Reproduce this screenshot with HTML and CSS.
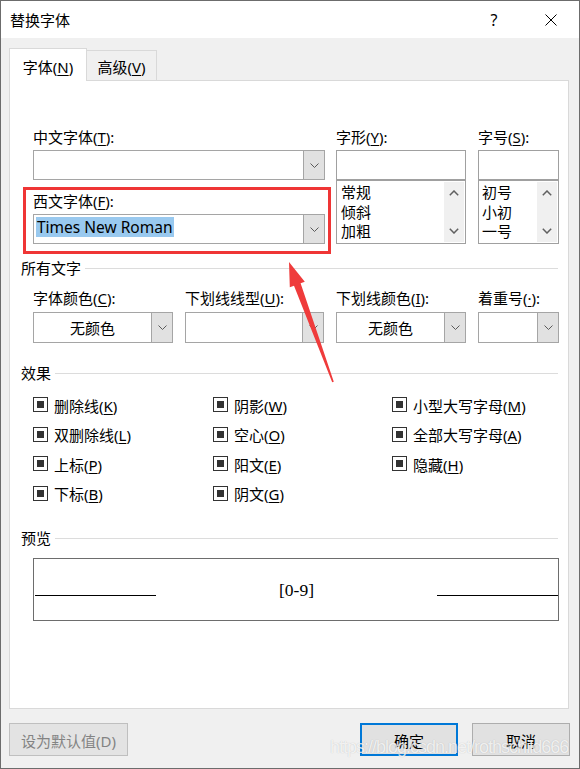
FILE: index.html
```html
<!DOCTYPE html>
<html lang="zh-CN">
<head>
<meta charset="utf-8">
<title>替换字体</title>
<link rel="stylesheet" href="styles.css">
</head>
<body>
<div class="window">
  <header class="titlebar">
    <span class="title">替换字体</span>
    <span class="caption-btn help">?</span>
    <span class="caption-btn close">
      <svg width="12" height="12" viewBox="0 0 12 12"><path d="M0.5 0.5 L11.5 11.5 M11.5 0.5 L0.5 11.5" stroke="#000" stroke-width="1" fill="none"/></svg>
    </span>
  </header>

  <div class="client">
    <nav class="tabs">
      <div class="tab active">字体(<u>N</u>)</div>
      <div class="tab next">高级(<u>V</u>)</div>
    </nav>

    <section class="panel">
      <div class="font-pick">
        <div class="col-main">
          <div class="label">中文字体(<u>T</u>):</div>
          <div class="combo">
            <span class="combo-text"></span>
            <span class="combo-btn"><svg width="9" height="5" viewBox="0 0 9 5"><polyline points="0.5,0.5 4.5,4.5 8.5,0.5" fill="none" stroke="#5a5a5a" stroke-width="1"/></svg></span>
          </div>
          <div class="callout">
            <div class="label">西文字体(<u>F</u>):</div>
            <div class="combo">
              <span class="combo-text"><span class="sel">Times New Roman</span></span>
              <span class="combo-btn"><svg width="9" height="5" viewBox="0 0 9 5"><polyline points="0.5,0.5 4.5,4.5 8.5,0.5" fill="none" stroke="#5a5a5a" stroke-width="1"/></svg></span>
            </div>
          </div>
        </div>

        <div class="col-style">
          <div class="label">字形(<u>Y</u>):</div>
          <div class="field"></div>
          <div class="listbox">
            <ul class="items">
              <li>常规</li>
              <li>倾斜</li>
              <li>加粗</li>
            </ul>
            <div class="vscroll">
              <svg width="10" height="6" viewBox="0 0 10 6"><polyline points="0.8,5.2 5,1 9.2,5.2" fill="none" stroke="#606060" stroke-width="1.5"/></svg>
              <svg width="10" height="6" viewBox="0 0 10 6"><polyline points="0.8,0.8 5,5 9.2,0.8" fill="none" stroke="#606060" stroke-width="1.5"/></svg>
            </div>
          </div>
        </div>

        <div class="col-size">
          <div class="label">字号(<u>S</u>):</div>
          <div class="field"></div>
          <div class="listbox">
            <ul class="items small">
              <li>初号</li>
              <li>小初</li>
              <li>一号</li>
            </ul>
            <div class="vscroll">
              <svg width="10" height="6" viewBox="0 0 10 6"><polyline points="0.8,5.2 5,1 9.2,5.2" fill="none" stroke="#606060" stroke-width="1.5"/></svg>
              <svg width="10" height="6" viewBox="0 0 10 6"><polyline points="0.8,0.8 5,5 9.2,0.8" fill="none" stroke="#606060" stroke-width="1.5"/></svg>
            </div>
          </div>
        </div>
      </div>

      <div class="group-title first"><span>所有文字</span></div>

      <div class="attr-row">
        <div class="attr">
          <div class="label">字体颜色(<u>C</u>):</div>
          <div class="combo tall">
            <span class="combo-text center">无颜色</span>
            <span class="combo-btn"><svg width="9" height="5" viewBox="0 0 9 5"><polyline points="0.5,0.5 4.5,4.5 8.5,0.5" fill="none" stroke="#5a5a5a" stroke-width="1"/></svg></span>
          </div>
        </div>
        <div class="attr">
          <div class="label">下划线线型(<u>U</u>):</div>
          <div class="combo tall">
            <span class="combo-text center"></span>
            <span class="combo-btn"><svg width="9" height="5" viewBox="0 0 9 5"><polyline points="0.5,0.5 4.5,4.5 8.5,0.5" fill="none" stroke="#5a5a5a" stroke-width="1"/></svg></span>
          </div>
        </div>
        <div class="attr">
          <div class="label">下划线颜色(<u>I</u>):</div>
          <div class="combo tall">
            <span class="combo-text center">无颜色</span>
            <span class="combo-btn"><svg width="9" height="5" viewBox="0 0 9 5"><polyline points="0.5,0.5 4.5,4.5 8.5,0.5" fill="none" stroke="#5a5a5a" stroke-width="1"/></svg></span>
          </div>
        </div>
        <div class="attr">
          <div class="label">着重号(<u>·</u>):</div>
          <div class="combo tall">
            <span class="combo-text center"></span>
            <span class="combo-btn"><svg width="9" height="5" viewBox="0 0 9 5"><polyline points="0.5,0.5 4.5,4.5 8.5,0.5" fill="none" stroke="#5a5a5a" stroke-width="1"/></svg></span>
          </div>
        </div>
      </div>

      <div class="group-title effects-title"><span>效果</span></div>

      <div class="effects">
        <label class="check"><span class="cb"><i></i></span>删除线(<u>K</u>)</label>
        <label class="check"><span class="cb"><i></i></span>阴影(<u>W</u>)</label>
        <label class="check"><span class="cb"><i></i></span>小型大写字母(<u>M</u>)</label>
        <label class="check"><span class="cb"><i></i></span>双删除线(<u>L</u>)</label>
        <label class="check"><span class="cb"><i></i></span>空心(<u>O</u>)</label>
        <label class="check"><span class="cb"><i></i></span>全部大写字母(<u>A</u>)</label>
        <label class="check"><span class="cb"><i></i></span>上标(<u>P</u>)</label>
        <label class="check"><span class="cb"><i></i></span>阳文(<u>E</u>)</label>
        <label class="check"><span class="cb"><i></i></span>隐藏(<u>H</u>)</label>
        <label class="check"><span class="cb"><i></i></span>下标(<u>B</u>)</label>
        <label class="check"><span class="cb"><i></i></span>阴文(<u>G</u>)</label>
      </div>

      <div class="group-title preview-title"><span>预览</span></div>

      <div class="preview">
        <span class="rule"></span>
        <span class="sample">[0-9]</span>
        <span class="rule"></span>
      </div>
    </section>

    <footer class="buttons">
      <button class="btn default" disabled>设为默认值(D)</button>
      <button class="btn ok">确定</button>
      <button class="btn cancel">取消</button>
    </footer>
  </div>

  <svg class="arrow" width="60" height="135" viewBox="0 0 60 135">
    <polygon points="9,7 24.8,26.7 20.6,28.3 53.8,126.7 52.2,127.3 14,30.7 9.8,32.3" fill="#ef3b3b"/>
  </svg>
  <span class="watermark">https://blog.csdn.net/rothschild666</span>
</div>
</body>
</html>
```

FILE: styles.css
```css
* {
  box-sizing: border-box;
}

html,
body {
  margin: 0;
  padding: 0;
}

body {
  width: 580px;
  height: 769px;
  overflow: hidden;
  background: #f0f0f0;
  color: #000;
  font-family: "Noto Sans", "Noto Sans CJK SC", sans-serif;
  font-size: 15px;
  line-height: 20px;
}

u {
  text-decoration: underline;
  text-underline-offset: 2px;
  text-decoration-thickness: 1px;
}

/* window frame */
.window {
  position: relative;
  width: 580px;
  height: 769px;
  border: 1px solid #6c6c6c;
  background: #f0f0f0;
  display: flex;
  flex-direction: column;
}

.titlebar {
  height: 37px;
  flex: none;
  background: #fff;
  display: flex;
  align-items: center;
  padding-left: 9px;
}

.title {
  flex: 1;
}

.caption-btn {
  width: 57px;
  height: 37px;
  display: flex;
  align-items: center;
  justify-content: center;
}

.help {
  font-size: 16px;
  padding-left: 1px;
}

/* client area */
.client {
  flex: 1;
  display: flex;
  flex-direction: column;
  padding: 0 10px 0 8px;
}

.tabs {
  height: 42px;
  display: flex;
  align-items: flex-end;
}

.tab {
  height: 30px;
  padding-top: 6px;
  text-align: center;
  background: #f0f0f0;
  border: 1px solid #d9d9d9;
  border-bottom: none;
}

.tab.active {
  width: 78px;
  height: 33px;
  padding-top: 8px;
  background: #fff;
  margin-bottom: -1px;
  position: relative;
  z-index: 1;
}

.tab.next {
  width: 70px;
  border-left: none;
}

.panel {
  height: 629px;
  background: #fff;
  border: 1px solid #d9d9d9;
  padding: 0 9px 0 23px;
}

/* font family / style / size */
.font-pick {
  display: flex;
  margin-top: 46px;
}

.col-main {
  width: 292px;
}

.col-style {
  width: 130px;
  margin-left: 11px;
}

.col-size {
  width: 81px;
  margin-left: 12px;
}

.label {
  height: 20px;
  margin-bottom: 3px;
  white-space: nowrap;
}

.combo {
  height: 30px;
  display: flex;
  border: 1px solid #a5a5a5;
  background: #fff;
}

.combo.tall {
  height: 31px;
}

.combo-text {
  flex: 1;
  min-width: 0;
  padding: 2px 0 0 2px;
  white-space: nowrap;
}

.combo-text.center {
  padding: 0;
  display: flex;
  align-items: center;
  justify-content: center;
}

.combo-btn {
  width: 21px;
  flex: none;
  background: #e1e1e1;
  border-left: 1px solid #a5a5a5;
  display: flex;
  align-items: center;
  justify-content: center;
}

.sel {
  display: inline-block;
  height: 20px;
  padding: 0 1px;
  background: #99c9ef;
  font-size: 15.5px;
}

.callout {
  margin: 7px -6px 0 -10px;
  border: 3px solid #ef3535;
  padding: 1px 3px 7px 7px;
}

.field {
  height: 30px;
  border: 1px solid #a0a0a0;
  background: #fff;
}

.listbox {
  height: 64px;
  border: 1px solid #a0a0a0;
  display: flex;
  padding: 1px;
}

.items {
  flex: 1;
  list-style: none;
  margin: 0;
  padding: 1px 0 0 3px;
}

.items.small {
  padding-left: 2px;
}

.items li {
  height: 19.5px;
  line-height: 19.5px;
}

.vscroll {
  width: 20px;
  background: #f0f0f0;
  display: flex;
  flex-direction: column;
  align-items: center;
  justify-content: space-between;
  padding: 8px 0 8px;
}

/* section headings with a rule */
.group-title {
  display: flex;
  align-items: center;
  margin-left: -12px;
  margin-right: 1px;
  height: 20px;
}

.group-title::after {
  content: "";
  flex: 1;
  height: 1px;
  margin-left: 4px;
  background: #dcdcdc;
}

.group-title.first {
  margin-top: 4px;
}

.group-title.effects-title {
  margin-top: 20px;
}

.group-title.preview-title {
  margin-top: 19px;
}

/* text attributes */
.attr-row {
  display: grid;
  grid-template-columns: 140px 139px 130px 81px;
  column-gap: 12px;
  margin-top: 10px;
}

.attr .label {
  margin-bottom: 4px;
}

/* effect check boxes */
.effects {
  display: grid;
  grid-template-columns: 180px 179px 1fr;
  grid-auto-rows: 29.5px;
  margin-top: 8px;
}

.check {
  display: flex;
  align-items: center;
  white-space: nowrap;
}

.cb {
  width: 15px;
  height: 15px;
  flex: none;
  border: 1px solid #333;
  padding: 3px;
  margin: -2px 6px 0 0;
}

.cb i {
  display: block;
  width: 7px;
  height: 7px;
  background: #333;
}

/* preview box */
.preview {
  height: 63px;
  margin-top: 10px;
  border: 1px solid #6d6d6d;
  display: flex;
  justify-content: space-between;
  align-items: flex-start;
  padding: 0 0 0 1px;
}

.rule {
  width: 121px;
  height: 1px;
  margin-top: 36px;
  background: #000;
}

.sample {
  margin-top: 21px;
  font-family: "Liberation Serif", serif;
  font-size: 17.5px;
  line-height: 20px;
}

/* dialog buttons */
.buttons {
  display: flex;
  margin-top: 14px;
  margin-right: -1px;
}

.btn {
  height: 33px;
  padding: 2px 0 0;
  font: inherit;
  color: #000;
  background: #e1e1e1;
  border: 1px solid #adadad;
}

.btn.default {
  width: 119px;
  color: #838383;
  border-color: #bfbfbf;
  background: #e3e3e3;
}

.btn.ok {
  width: 98px;
  margin-left: auto;
  border: 2px solid #0078d7;
}

.btn.cancel {
  width: 98px;
  margin-left: 14px;
}

/* annotation arrow drawn over the dialog */
.arrow {
  position: absolute;
  left: 279px;
  top: 254px;
}

/* site watermark laid over the lower corner */
.watermark {
  position: absolute;
  left: 329px;
  top: 737px;
  font-family: "Liberation Sans", sans-serif;
  font-size: 18px;
  line-height: 18px;
  letter-spacing: -1px;
  color: rgba(255, 255, 255, 0.8);
  text-shadow: 0 0 1px rgba(0, 0, 0, 0.22);
  white-space: nowrap;
}
```
